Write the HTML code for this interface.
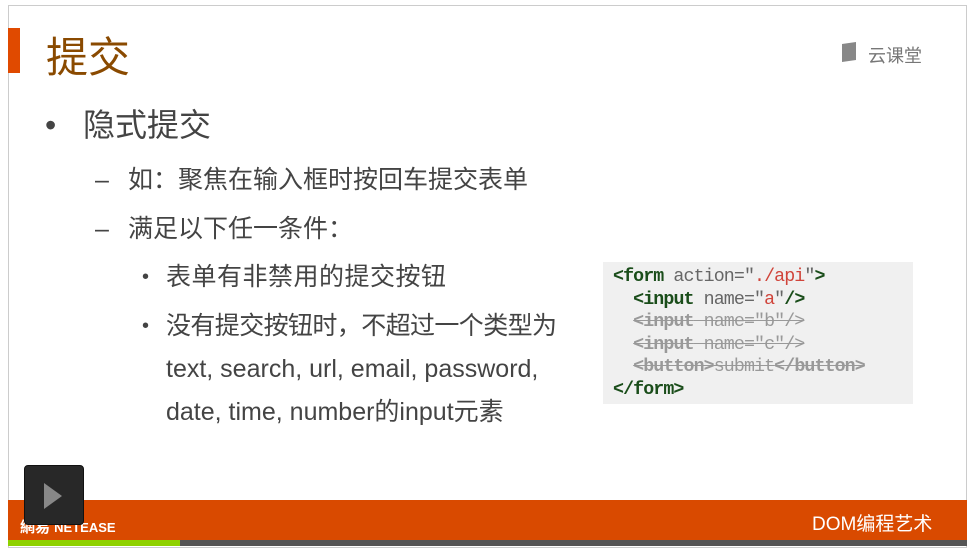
<!DOCTYPE html>
<html><head><meta charset="utf-8"><style>
*{margin:0;padding:0}
body{width:973px;height:552px;background:#fff;position:relative;overflow:hidden;font-family:"Liberation Sans","Noto Sans CJK SC",sans-serif}
.a{position:absolute;white-space:nowrap}
.t{color:#444;line-height:30px}
.code{position:absolute;left:603px;top:262px;width:310px;height:142px;background:#f0f0f0;font-family:"Liberation Mono","DejaVu Sans Mono",monospace;font-size:18.3px;line-height:22.5px;padding:4px 0 0 10px;box-sizing:border-box;color:#666;white-space:pre;letter-spacing:-0.9px}
.k{color:#1a4d1a;font-weight:bold}
.s{color:#d0443a}
.x{color:#999;text-decoration:line-through}
.x b{font-weight:bold}
</style></head><body>
<div class="a" style="left:8px;top:5px;width:959px;height:543px;border:1px solid #ccc;box-sizing:border-box"></div>
<div class="a" style="left:8px;top:28px;width:12px;height:45px;background:#e04a00"></div>
<div class="a" style="left:46px;top:24px;font-size:42px;color:#8a4a00">提交</div>
<div class="a" style="left:842px;top:43px;width:14px;height:18px;background:#888;transform:skewY(-8deg)"></div>
<div class="a" style="left:868px;top:42px;font-size:18px;color:#777">云课堂</div>
<div class="a t" style="left:45px;top:105px;font-size:32px;line-height:40px">•</div>
<div class="a t" style="left:83px;top:105px;font-size:32px;line-height:40px">隐式提交</div>
<div class="a t" style="left:95px;top:165px;font-size:25px">–</div>
<div class="a t" style="left:128px;top:165px;font-size:25px">如：聚焦在输入框时按回车提交表单</div>
<div class="a t" style="left:95px;top:214px;font-size:25px">–</div>
<div class="a t" style="left:128px;top:214px;font-size:25px">满足以下任一条件：</div>
<div class="a t" style="left:142px;top:262px;font-size:20px">•</div>
<div class="a t" style="left:166px;top:262px;font-size:25px;letter-spacing:0.5px">表单有非禁用的提交按钮</div>
<div class="a t" style="left:142px;top:311px;font-size:20px">•</div>
<div class="a t" style="left:166px;top:311px;font-size:25px;letter-spacing:-0.6px">没有提交按钮时，不超过一个类型为</div>
<div class="a t" style="left:166px;top:354px;font-size:25px">text, search, url, email, password,</div>
<div class="a t" style="left:166px;top:397px;font-size:25px">date, time, number的input元素</div>
<div class="code"><span class="k">&lt;form</span> action=<span>"</span><span class="s">./api</span>"<span class="k">&gt;</span>
  <span class="k">&lt;input</span> name="<span class="s">a</span>"<span class="k">/&gt;</span>
  <span class="x"><b>&lt;input</b> name="b"/&gt;</span>
  <span class="x"><b>&lt;input</b> name="c"/&gt;</span>
  <span class="x"><b>&lt;button&gt;</b>submit<b>&lt;/button&gt;</b></span>
<span class="k">&lt;/form&gt;</span></div>
<div class="a" style="left:8px;top:500px;width:959px;height:40px;background:#d94a00"></div>
<div class="a" style="left:8px;top:540px;width:959px;height:6px;background:#555"></div>
<div class="a" style="left:8px;top:540px;width:172px;height:6px;background:#8ed100"></div>
<div class="a" style="left:20px;top:516px;font-size:15px;color:#fff;font-weight:bold">網易 <span style="font-size:13px">NETEASE</span></div>
<div class="a" style="left:812px;top:509px;font-size:19px;color:#fff">DOM编程艺术</div>
<div class="a" style="left:24px;top:465px;width:58px;height:58px;background:#282828;border-radius:4px;border:1px solid #111"></div>
<div class="a" style="left:44px;top:483px;width:0;height:0;border-left:18px solid #888;border-top:13px solid transparent;border-bottom:13px solid transparent"></div>
</body></html>
